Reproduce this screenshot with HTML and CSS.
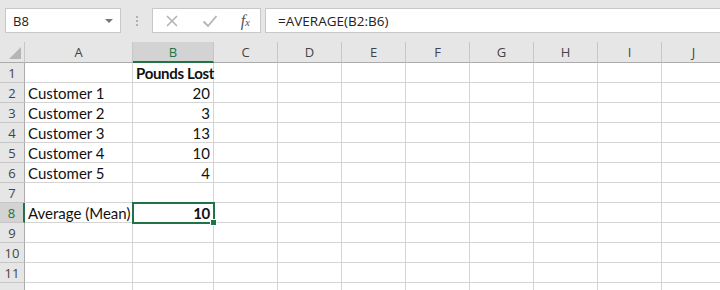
FILE: index.html
```html
<!DOCTYPE html>
<html lang="en">
<head>
  <meta charset="UTF-8">
  <title>Average (Mean)</title>
  <link rel="stylesheet" href="styles.css">
</head>
<body>
  <div class="toolbar">
    <div class="namebox">
      <span>B8</span>
      <span class="arrow"></span>
    </div>
    <div class="dots"><i></i><i></i><i></i></div>
    <div class="fxbtns">
      <svg width="14" height="14" viewBox="0 0 14 14"><path d="M2 2 L12 12 M12 2 L2 12" stroke="#b4b4b4" stroke-width="1.6" fill="none"/></svg>
      <svg width="16" height="14" viewBox="0 0 16 14"><path d="M1.5 7.5 L6 12 L14.5 2" stroke="#b4b4b4" stroke-width="1.8" fill="none"/></svg>
      <span class="fx">f<small>x</small></span>
    </div>
    <div class="formula">=AVERAGE(B2:B6)</div>
  </div>

  <div class="sheet head">
    <div class="corner"><span class="tri"></span></div>
    <div class="colhdr">A</div>
    <div class="colhdr active">B</div>
    <div class="colhdr">C</div>
    <div class="colhdr">D</div>
    <div class="colhdr">E</div>
    <div class="colhdr">F</div>
    <div class="colhdr">G</div>
    <div class="colhdr">H</div>
    <div class="colhdr">I</div>
    <div class="colhdr">J</div>
  </div>
  <div class="sheet" id="rows"></div>

  <script>
    var data = [
      ['', 'Pounds Lost'],
      ['Customer 1', '20'],
      ['Customer 2', '3'],
      ['Customer 3', '13'],
      ['Customer 4', '10'],
      ['Customer 5', '4'],
      ['', ''],
      ['Average (Mean)', '10'],
      ['', ''],
      ['', ''],
      ['', ''],
      ['', '']
    ];
    var rows = document.getElementById('rows');
    var html = '';
    data.forEach(function (r, i) {
      var n = i + 1;
      html += '<div class="rowhdr' + (n === 8 ? ' active' : '') + '">' + (n < 12 ? n : '') + '</div>';
      html += '<div class="cell">' + r[0] + '</div>';
      var cls = 'cell num';
      if (n === 1) cls += ' bold';
      if (n === 8) cls += ' bold selected';
      html += '<div class="' + cls + '">' + r[1] + '</div>';
      for (var c = 0; c < 8; c++) html += '<div class="cell"></div>';
    });
    rows.innerHTML = html;
  </script>
</body>
</html>
```

FILE: styles.css
```css
* {
  box-sizing: border-box;
}

body {
  margin: 0;
  background: #fff;
  font-family: 'Open Sans', sans-serif;
  overflow: hidden;
}

.toolbar {
  display: flex;
  align-items: flex-start;
  height: 42px;
  padding: 8px 0 0 5px;
  background: #e6e6e6;
}

.namebox {
  width: 116px;
  height: 25px;
  background: #fff;
  border: 1px solid #c8c8c8;
  display: flex;
  align-items: center;
  justify-content: space-between;
  padding: 0 7px 0 7px;
  font-size: 13px;
  color: #222;
}

.arrow {
  width: 0;
  height: 0;
  border-left: 4px solid transparent;
  border-right: 4px solid transparent;
  border-top: 4px solid #777;
}

.dots {
  width: 31px;
  height: 25px;
  display: flex;
  flex-direction: column;
  align-items: center;
  justify-content: center;
  gap: 2px;
}

.dots i {
  width: 2px;
  height: 2px;
  background: #b0b0b0;
}

.fxbtns {
  width: 109px;
  height: 25px;
  background: #fff;
  border: 1px solid #c8c8c8;
  display: flex;
  align-items: center;
  justify-content: space-between;
  padding: 0 10px 0 12px;
}

.fx {
  font-family: 'Liberation Serif', serif;
  font-style: italic;
  font-size: 16px;
  color: #555;
  line-height: 1;
}

.fx small {
  font-size: 11px;
}

.formula {
  flex: 1;
  height: 25px;
  margin-left: 4px;
  background: #fff;
  border: 1px solid #c8c8c8;
  border-right: none;
  padding: 3px 0 0 12px;
  font-size: 13.5px;
  color: #222;
}

.sheet {
  display: grid;
  grid-template-columns: 25px 108px 81px repeat(8, 64px);
  grid-auto-rows: 20px;
  width: 745px;
}

.sheet.head {
  grid-auto-rows: 21px;
}

.corner,
.colhdr {
  background: #e6e6e6;
  border-right: 1px solid #c6c6c6;
  border-bottom: 1px solid #ababab;
  font-size: 13px;
  color: #444;
  text-align: center;
  line-height: 20px;
}

.corner {
  position: relative;
}

.tri {
  position: absolute;
  right: 3px;
  bottom: 3px;
  width: 0;
  height: 0;
  border-left: 12px solid transparent;
  border-bottom: 12px solid #b5b5b5;
}

.colhdr.active {
  background: #d3d3d3;
  border-bottom: 2px solid #217346;
  color: #217346;
}

.rowhdr {
  background: #e6e6e6;
  border-right: 1px solid #ababab;
  border-bottom: 1px solid #c6c6c6;
  font-size: 13px;
  color: #444;
  text-align: center;
  padding-top: 2px;
  line-height: 17px;
}

.rowhdr.active {
  background: #d3d3d3;
  color: #217346;
  border-right: 2px solid #217346;
}

.cell {
  border-right: 1px solid #d4d4d4;
  border-bottom: 1px solid #d4d4d4;
  font-family: 'Lato', sans-serif;
  font-size: 15px;
  color: #111;
  padding: 2px 3px 0 3px;
  line-height: 17px;
  white-space: nowrap;
}

.num {
  text-align: right;
}

.bold {
  font-weight: bold;
  letter-spacing: -0.3px;
}

.selected {
  position: relative;
  outline: 2px solid #217346;
  outline-offset: -1px;
  z-index: 1;
}

.selected::after {
  content: '';
  position: absolute;
  right: -4px;
  bottom: -4px;
  width: 5px;
  height: 5px;
  background: #217346;
  border: 1px solid #fff;
}
```
